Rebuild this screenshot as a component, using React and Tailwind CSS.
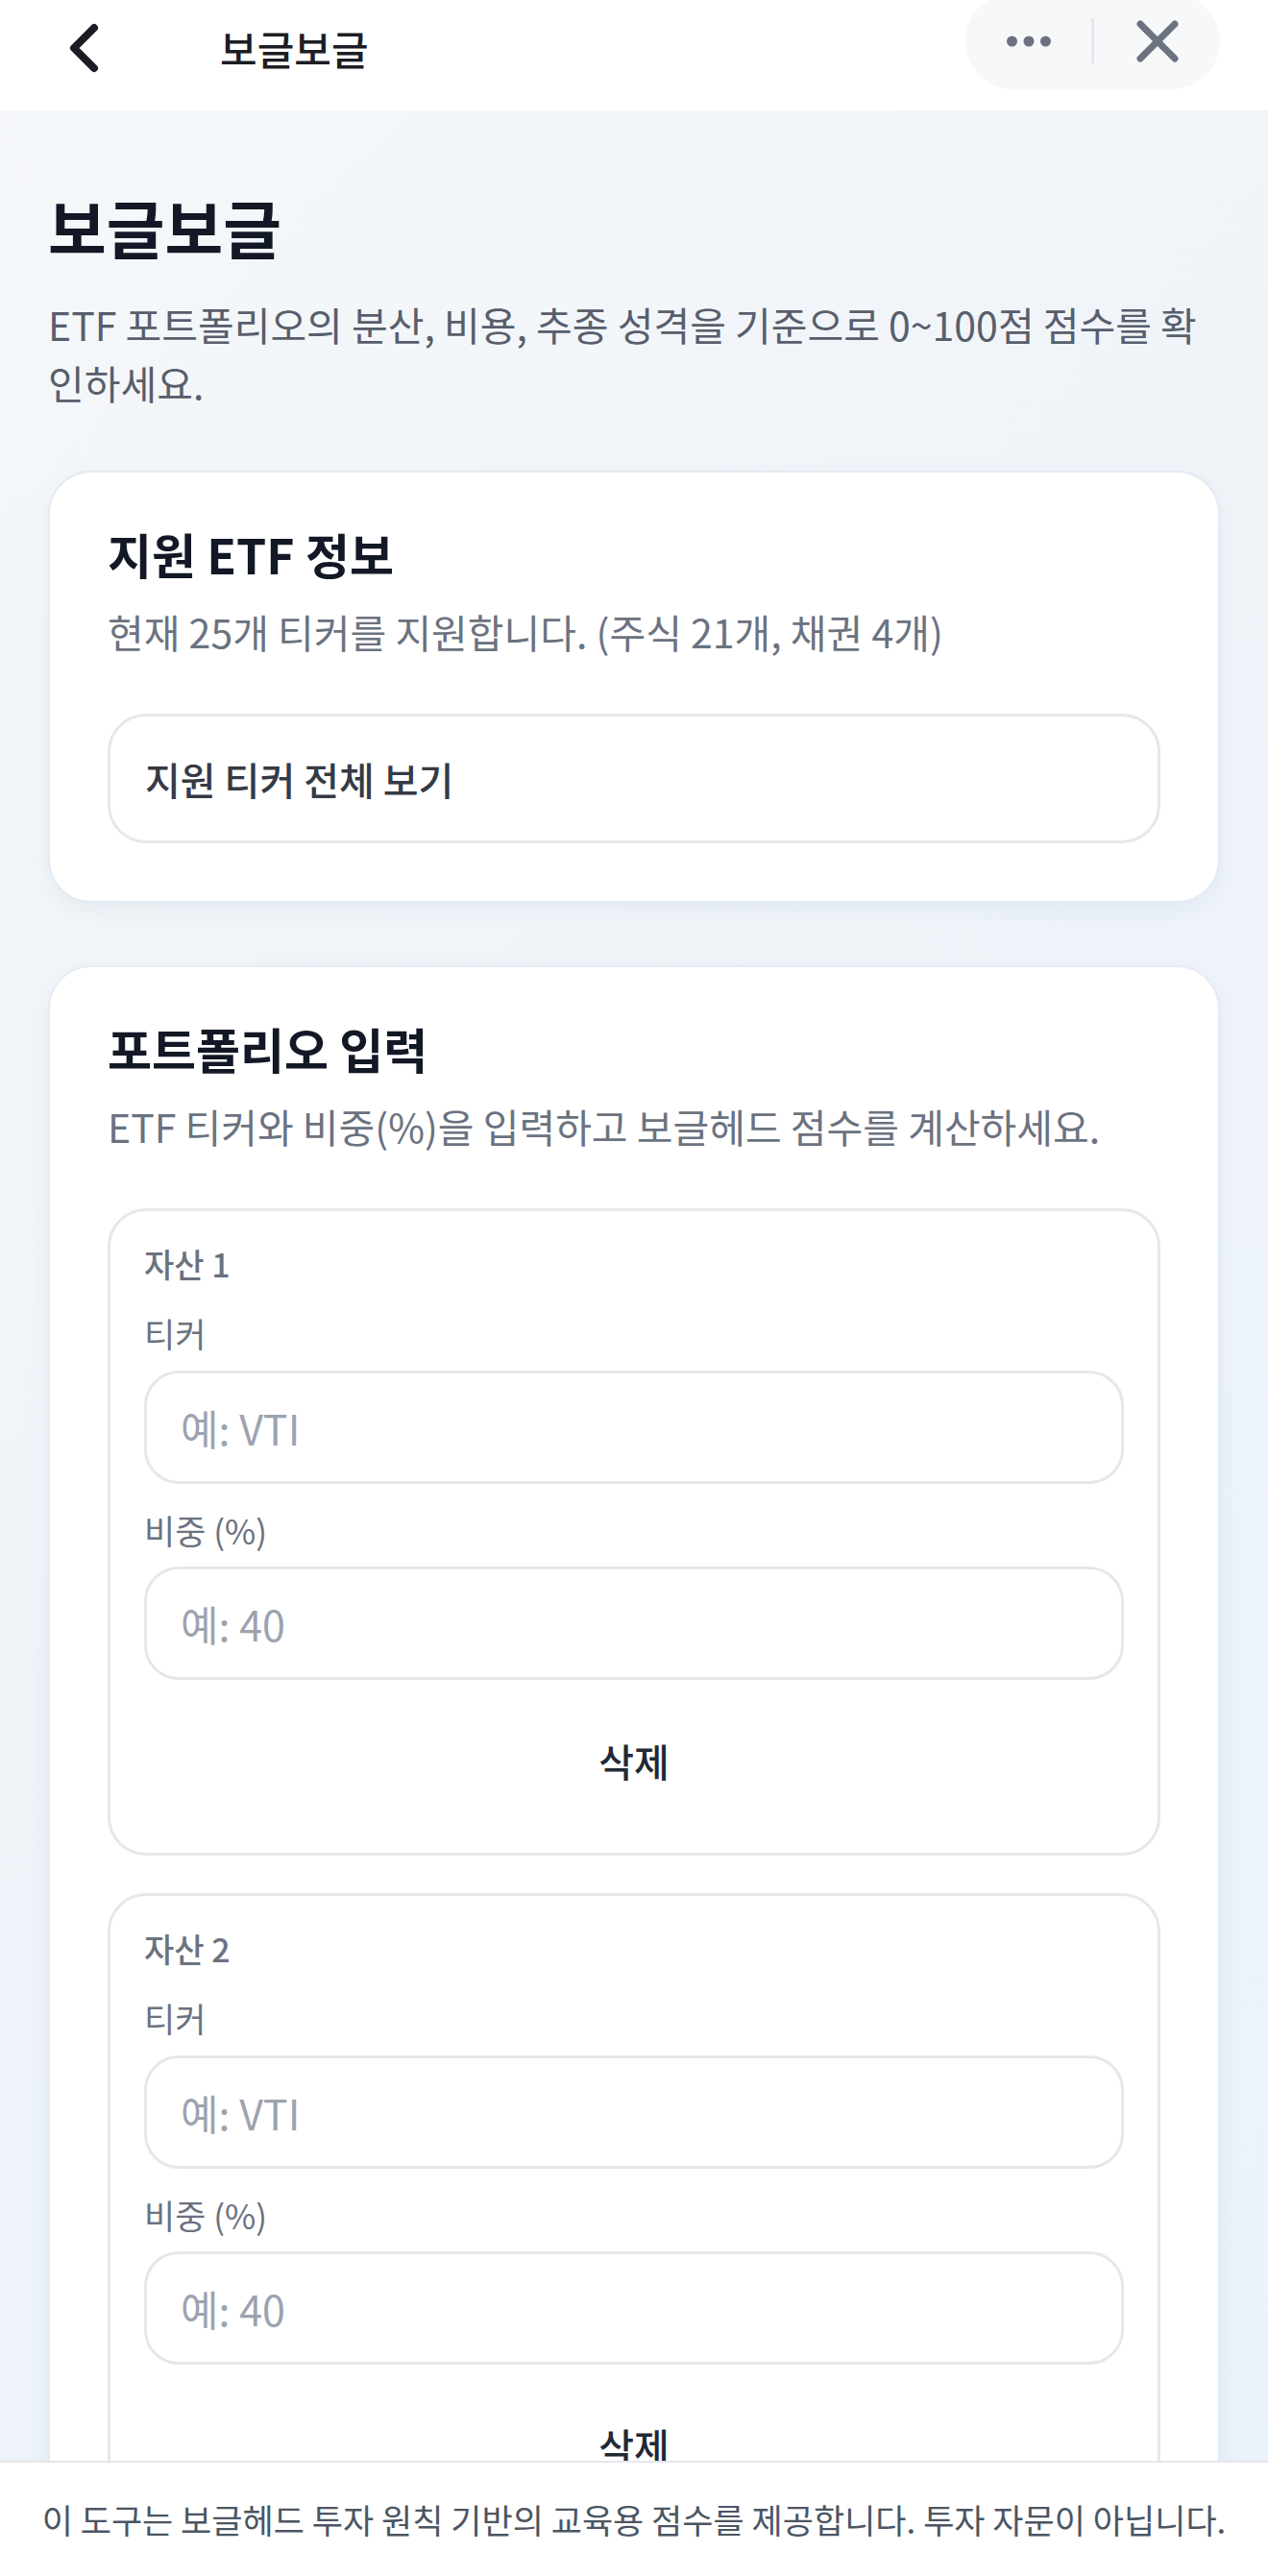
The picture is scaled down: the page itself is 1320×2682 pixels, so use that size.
import React from "react";

function AssetBox({ index }) {
  return (
    <div className="border-[3px] border-[#e5e7eb] rounded-[40px] bg-white px-[35px] pt-[35px] pb-[36px] flex flex-col">
      <div className="text-[34px] leading-[40px] font-medium text-[#6b7280]">자산 {index}</div>
      <div className="mt-[32px] text-[35px] leading-[40px] text-[#6b7280]">티커</div>
      <input
        className="mt-[19px] h-[118px] w-full rounded-[36px] border-[3px] border-[#e5e7eb] bg-white pl-[35px] text-[43px] text-[#111827] placeholder:text-[#9ca3af] outline-none"
        placeholder="예: VTI"
      />
      <div className="mt-[28px] text-[35px] leading-[40px] text-[#6b7280]">비중 (%)</div>
      <input
        className="mt-[18px] h-[118px] w-full rounded-[36px] border-[3px] border-[#e5e7eb] bg-white pl-[35px] text-[43px] text-[#111827] placeholder:text-[#9ca3af] outline-none"
        placeholder="예: 40"
      />
      <button className="mt-[24px] h-[120px] w-full flex items-center justify-center text-[40px] font-medium text-[#1f2937]">
        삭제
      </button>
    </div>
  );
}

export default function App() {
  return (
    <div className="relative h-[2682px] overflow-hidden font-['Noto_Sans_CJK_KR','Noto_Sans',sans-serif] bg-[linear-gradient(135deg,#f6f8fa_0%,#eff4f9_45%,#eaf2fb_100%)]">
      {/* Header */}
      <header className="h-[115px] bg-white flex items-center pb-[15px]">
        <div className="pl-[70px] flex items-center">
          <svg width="34" height="56" viewBox="0 0 34 56" fill="none">
            <polyline points="28,7 7,28 28,49" stroke="#1c1d24" strokeWidth="8" strokeLinecap="round" strokeLinejoin="round" />
          </svg>
        </div>
        <div className="ml-[125px] text-[42px] leading-[50px] font-medium text-[#1c1d24]">보글보글</div>
        <div className="ml-auto mr-[50px] mt-[15px] -translate-y-[15px] flex items-center h-[100px] w-[265px] rounded-full bg-[#f7f8fa]">
          <button className="w-[131px] h-full flex items-center justify-center">
            <svg width="46" height="12" viewBox="0 0 46 12">
              <circle cx="5.5" cy="6" r="5.5" fill="#6b7280" />
              <circle cx="23" cy="6" r="5.5" fill="#6b7280" />
              <circle cx="40.5" cy="6" r="5.5" fill="#6b7280" />
            </svg>
          </button>
          <div className="w-[3px] h-[47px] bg-[#e5e7eb]" />
          <button className="w-[131px] h-full flex items-center justify-center">
            <svg width="44" height="44" viewBox="0 0 44 44" fill="none">
              <line x1="4" y1="4" x2="40" y2="40" stroke="#6b7280" strokeWidth="7" strokeLinecap="round" />
              <line x1="40" y1="4" x2="4" y2="40" stroke="#6b7280" strokeWidth="7" strokeLinecap="round" />
            </svg>
          </button>
        </div>
      </header>

      {/* Main */}
      <main className="px-[50px] pt-[81px]">
        <h1 className="text-[66px] leading-[78px] font-bold text-[#131826]">보글보글</h1>
        <p className="mt-[33px] text-[41px] leading-[61px] text-[#585e6c]">
          ETF 포트폴리오의 분산, 비용, 추종 성격을 기준으로 0~100점 점수를 확인하세요.
        </p>

        <section className="mt-[61px] rounded-[45px] bg-white border-2 border-[#e4ebf3] shadow-[0_8px_24px_rgba(40,70,120,0.06)] p-[60px]">
          <h2 className="text-[50px] leading-[48px] font-bold text-[#131826]">지원 ETF 정보</h2>
          <p className="mt-[29px] text-[41px] leading-[56px] text-[#6b7280]">
            현재 25개 티커를 지원합니다. (주식 21개, 채권 4개)
          </p>
          <button className="mt-[58px] w-full h-[135px] rounded-[40px] border-[3px] border-[#e5e7eb] bg-white flex items-center pl-[36px] text-[40px] font-medium text-[#363a45]">
            지원 티커 전체 보기
          </button>
        </section>

        <section className="mt-[65px] rounded-[45px] bg-white border-2 border-[#e4ebf3] shadow-[0_8px_24px_rgba(40,70,120,0.06)] p-[60px]">
          <h2 className="text-[50px] leading-[48px] font-bold text-[#131826]">포트폴리오 입력</h2>
          <p className="mt-[29px] text-[41px] leading-[56px] text-[#6b7280]">
            ETF 티커와 비중(%)을 입력하고 보글헤드 점수를 계산하세요.
          </p>
          <div className="mt-[58px] flex flex-col gap-[39px]">
            <AssetBox index={1} />
            <AssetBox index={2} />
          </div>
        </section>
      </main>

      {/* Footer */}
      <footer className="absolute bottom-0 left-0 right-0 h-[120px] bg-white border-t-2 border-[#e5e7eb] flex items-center justify-center">
        <p className="text-[35px] leading-[40px] text-[#4b5563] whitespace-nowrap">
          이 도구는 보글헤드 투자 원칙 기반의 교육용 점수를 제공합니다. 투자 자문이 아닙니다.
        </p>
      </footer>
    </div>
  );
}
